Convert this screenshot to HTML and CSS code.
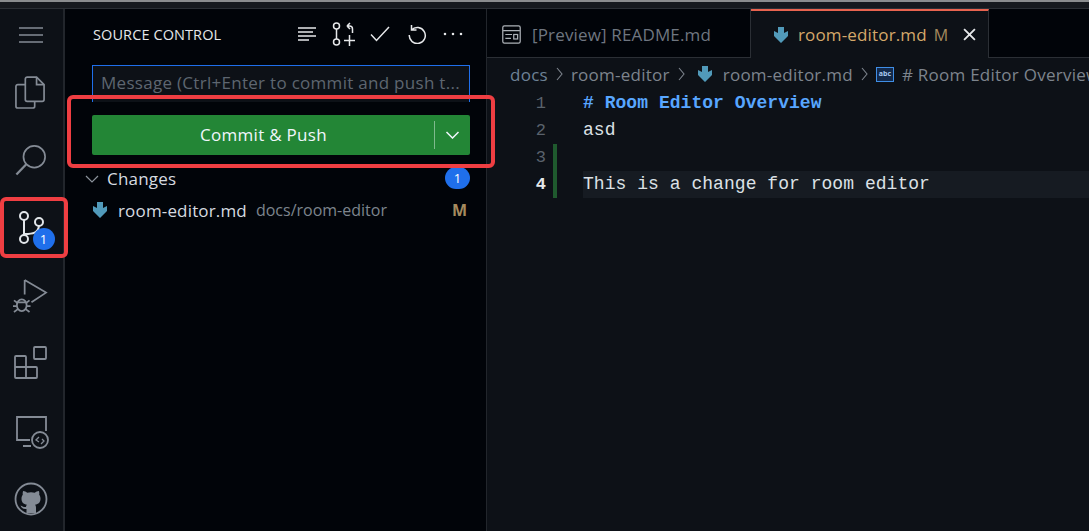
FILE: index.html
```html
<!DOCTYPE html>
<html lang="en">
<head>
<meta charset="utf-8">
<title>Source Control</title>
<link rel="stylesheet" href="styles.css">
</head>
<body>
<div class="topstrip"></div>
<div class="workbench">
  <nav class="activity">
    <svg class="ai menu" viewBox="0 0 24 18"><path d="M0 2h24M0 9h24M0 16h24"/></svg>
    <svg class="ai files" viewBox="0 0 32 36"><path d="M11 9H3a2 2 0 0 0-2 2v21a2 2 0 0 0 2 2h16a2 2 0 0 0 2-2v-5"/><path d="M11 3a2 2 0 0 1 2-2h10l8 8v16a2 2 0 0 1-2 2H13a2 2 0 0 1-2-2z"/><path d="M23 1v8h8"/></svg>
    <svg class="ai search" viewBox="0 0 34 34"><circle cx="20.5" cy="13.5" r="11.5"/><path d="M12 21.5 1.5 32.5" stroke-width="2.4"/></svg>
    <div class="scm-item">
      <svg class="ai scm" viewBox="0 0 28 38"><circle cx="5" cy="6" r="4"/><circle cx="5" cy="29" r="4"/><circle cx="20" cy="12" r="4"/><path d="M5 10v15M6 24c8 0 13-1 14-8"/></svg>
      <span class="act-badge">1</span>
    </div>
    <svg class="ai debug" viewBox="0 0 36 36"><path d="M12 1v15M12 1l22 13-15 10"/><ellipse cx="9" cy="27" rx="5" ry="6"/><path d="M5 24h8M1 22l4 3M17 22l-4 3M0 28h4M14 28h4M1 34l4-3M17 34l-4-3"/></svg>
    <svg class="ai ext" viewBox="0 0 34 34"><path d="M2 10h9a1 1 0 0 1 1 1v10h10a1 1 0 0 1 1 1v9a1 1 0 0 1-1 1H2a1 1 0 0 1-1-1V11a1 1 0 0 1 1-1zM1 21h11M12 21v11"/><rect x="20" y="1" width="12" height="12" rx="1"/></svg>
    <svg class="ai remote" viewBox="0 0 34 34"><path d="M31 16V2H2v23h13M8 31h8"/><circle cx="25" cy="25" r="8"/><path d="m24 22-3 3 3 2M27 24l2 2-3 3" stroke-width="1.3"/></svg>
    <svg class="ai github" viewBox="0 0 34 34"><circle cx="17" cy="17" r="15.5"/><path class="fill" d="M12.5 31v-4c-3.500 .5-5-1-6-3.500 2 .5 3 2 5.500 1.500 0-1 .5-1.800 1-2.200-3.500-.6-5.500-2.300-5.500-6.300 0-1.500.5-2.700 1.300-3.700-.2-1-.2-2.300.3-3.700 1.500 0 3 .8 4 1.700a13 13 0 0 1 7.800 0c1-.9 2.500-1.700 4-1.700.5 1.400.5 2.700.3 3.700.8 1 1.300 2.200 1.300 3.700 0 4-2 5.700-5.500 6.300.7.600 1 1.700 1 3V31z"/></svg>
  </nav>

  <aside class="sidebar">
    <header class="side-head">
      <span class="side-title">SOURCE CONTROL</span>
      <div class="side-actions">
        <svg class="hi" viewBox="0 0 20 16"><path d="M1 2h18M1 6h15M1 10h18M1 14h11"/></svg>
        <svg class="hi hi-wide" viewBox="0 0 24 24"><circle cx="4.500" cy="4" r="3"/><circle cx="4.500" cy="20" r="3"/><path d="M4.500 7v10M15 4h2.500a3 3 0 0 1 3 3v4M15 4l3-3M15 4l3 3M12 18.500h11M17.500 13v11"/></svg>
        <svg class="hi" viewBox="0 0 20 16"><path d="M1 8.500 6.500 14.500 19 1"/></svg>
        <svg class="hi" viewBox="0 0 20 20"><path d="M4.500 1v5h5M4.500 6a8 8 0 1 1-2.200 5"/></svg>
        <svg class="hi" viewBox="0 0 20 4"><path class="dots" d="M2 2h.01M10 2h.01M18 2h.01"/></svg>
      </div>
    </header>
    <div class="msg">Message (Ctrl+Enter to commit and push t...</div>
    <div class="commit">
      <span class="commit-label">Commit &amp; Push</span>
      <span class="commit-sep"></span>
      <svg class="commit-chev" viewBox="0 0 14 8"><path d="m1 1 6 6 6-6"/></svg>
    </div>
    <div class="changes">
      <svg class="chev" viewBox="0 0 14 8"><path d="m1 1 6 6 6-6"/></svg>
      <span class="changes-label">Changes</span>
      <span class="count">1</span>
    </div>
    <div class="file-row">
      <svg class="md" viewBox="0 0 14 16"><path d="M4 0h6v6l4-2v5l-7 7-7-7V4l4 2z"/></svg>
      <span class="file-name">room-editor.md</span>
      <span class="file-path">docs/room-editor</span>
      <span class="file-status">M</span>
    </div>
  </aside>

  <main class="editor">
    <div class="tabs">
      <div class="tab">
        <svg class="preview" viewBox="0 0 17 17"><rect x=".7" y=".7" width="15.600" height="15.600" rx="1.500"/><path d="M1 5h15M3 8.500h6M3 12h5"/><rect x="10.500" y="8.500" width="3.500" height="4"/></svg>
        <span>[Preview] README.md</span>
      </div>
      <div class="tab active">
        <svg class="md" viewBox="0 0 14 16"><path d="M4 0h6v6l4-2v5l-7 7-7-7V4l4 2z"/></svg>
        <span class="tab-name">room-editor.md</span>
        <span class="tab-m">M</span>
        <svg class="tab-x" viewBox="0 0 12 12"><path d="m1 1 10 10M11 1 1 11"/></svg>
      </div>
      <div class="tab-fill"></div>
    </div>
    <div class="crumbs">
      <span class="crumb-root">docs</span>
      <svg class="sep" viewBox="0 0 7 14"><path d="m1 1 5 6-5 6"/></svg>
      <span>room-editor</span>
      <svg class="sep" viewBox="0 0 7 14"><path d="m1 1 5 6-5 6"/></svg>
      <svg class="md" viewBox="0 0 14 16"><path d="M4 0h6v6l4-2v5l-7 7-7-7V4l4 2z"/></svg>
      <span>room-editor.md</span>
      <svg class="sep" viewBox="0 0 7 14"><path d="m1 1 5 6-5 6"/></svg>
      <span class="abc">abc</span>
      <span class="crumb-last"># Room Editor Overview</span>
    </div>
    <div class="code">
      <div class="line"><span class="num">1</span><span class="gutter"></span><span class="text head"># Room Editor Overview</span></div>
      <div class="line"><span class="num">2</span><span class="gutter"></span><span class="text">asd</span></div>
      <div class="line"><span class="num">3</span><span class="gutter added"></span><span class="text"></span></div>
      <div class="line current"><span class="num">4</span><span class="gutter added"></span><span class="text">This is a change for room editor</span></div>
    </div>
  </main>
</div>
<div class="mark mark-scm"></div>
<div class="mark mark-commit"></div>
</body>
</html>
```
FILE: styles.css
```css
* { box-sizing: border-box; }
html, body { margin: 0; height: 100%; overflow: hidden; background: #0d1117; }
body { font-family: "Open Sans", "Noto Sans", sans-serif; color: #c9d1d9; position: relative; }
svg { fill: none; stroke: currentColor; display: block; flex: none; }

.topstrip { height: 9px; background: #16191e; border-top: 2px solid #8a8c8e; border-bottom: 1px solid #2b2f35; }
.workbench { display: flex; height: 522px; }

.activity { width: 65px; flex: none; background: #0d1117; border-right: 2px solid #22262c; display: flex; flex-direction: column; align-items: center; color: #848b95; position: relative; }
.ai { stroke-width: 1.8; }
.menu { width: 24px; height: 18px; margin-top: 17px; margin-left: -2px; stroke-width: 1.5; }
.files { width: 30px; height: 34px; margin-top: 32px; margin-left: -3px; }
.search { width: 32px; height: 34px; margin-top: 33px; margin-left: -1px; }
.scm-item { width: 50px; height: 54px; margin-top: 27px; position: relative; display: flex; padding: 6px 0 0 12px; }
.scm { width: 28px; height: 38px; color: #e2e6ea; stroke-width: 2; }
.act-badge { position: absolute; left: 26px; top: 24px; width: 22px; height: 22px; border-radius: 50%; background: #1f6feb; color: #fff; font-size: 13px; line-height: 22px; text-align: center; }
.debug { width: 35px; height: 35px; margin-top: 21px; margin-left: -2px; }
.ext { width: 34px; height: 34px; margin-top: 32px; margin-left: -2px; }
.remote { width: 34px; height: 34px; margin-top: 35px; }
.github { width: 34px; height: 34px; margin-top: 33px; margin-left: -2px; }
.github .fill { fill: #848b95; stroke: none; }

.sidebar { width: 422px; flex: none; background: #010409; border-right: 1px solid #22262c; display: flex; flex-direction: column; padding: 0 16px 0 27px; }
.side-head { display: flex; align-items: center; justify-content: space-between; height: 50px; padding: 0 0 0 1px; }
.side-title { font-size: 14.500px; letter-spacing: .1px; color: #e6e8ea; }
.side-actions { display: flex; align-items: center; gap: 16.500px; color: #e6e8ea; margin-right: 7px; }
.hi { width: 20px; height: 20px; stroke-width: 1.5; }
.hi-wide { width: 24px; height: 24px; margin: 0 -2px; }
.dots { stroke-width: 2.6; stroke-linecap: round; }
.msg { height: 37px; margin-top: 6px; background: #0d1117; border: 1px solid #1f6feb; border-bottom: 0; padding: 4px 0 0 8px; font-size: 17px; line-height: 26px; color: #5e6670; white-space: nowrap; overflow: hidden; letter-spacing: .29px; }
.commit { height: 40px; margin-top: 13px; background: #238636; border-radius: 2px; display: flex; align-items: center; color: #f0f6fc; }
.commit-label { flex: 1; text-align: center; font-size: 17px; letter-spacing: .28px; padding: 0 0 2px 1px; }
.commit-sep { width: 1px; height: 28px; background: #7fb98d; }
.commit-chev { width: 15px; height: 8px; margin: 0 10px; stroke-width: 1.5; }
.changes { display: flex; align-items: center; height: 24px; margin-top: 12px; margin-left: -7px; font-size: 17px; color: #d6dbe0; }
.chev { width: 14px; height: 8px; stroke-width: 1.2; color: #8b929b; }
.changes-label { flex: 1; margin: -2px 0 0 8px; letter-spacing: .2px; }
.count { width: 25px; height: 22px; border-radius: 11px; background: #1f6feb; color: #fff; font-size: 13px; line-height: 22px; text-align: center; margin-top: -2px; }
.file-row { display: flex; align-items: center; height: 28px; margin-top: 5px; font-size: 17px; white-space: nowrap; }
.md { width: 14px; height: 16px; fill: #519aba; stroke: none; }
.file-row .md { margin-left: 1px; }
.file-name { margin-left: 11px; color: #d6dbe0; letter-spacing: .16px; }
.file-path { margin-left: 9px; color: #7d848d; font-size: 16px; flex: 1; }
.file-status { color: #a68a5e; font-weight: 700; font-size: 16px; margin-right: 3px; }

.editor { flex: 1; min-width: 0; background: #0d1117; }
.tabs { display: flex; height: 49px; background: #010409; }
.tab { width: 264px; display: flex; align-items: center; gap: 11px; padding: 2px 0 0 15px; border-bottom: 1px solid #2b2f35; border-right: 1px solid #2b2f35; font-size: 17px; letter-spacing: .15px; color: #6f7680; white-space: nowrap; }
.preview { width: 19px; height: 19px; color: #adb2b8; stroke-width: 1.100; }
.tab.active { width: 238px; padding: 0 0 0 23px; gap: 0; background: #0d1117; border-top: 2px solid #e8634f; border-bottom: 0; border-right: 1px solid #2b2f35; }
.tab-name { margin-left: 10px; color: #d4a86a; }
.tab-m { margin-left: 7px; color: #a68a5e; font-size: 16px; }
.tab-x { width: 13px; height: 13px; margin-left: 15px; color: #e6e8ea; stroke-width: 1.7; }
.tab-fill { flex: 1; border-bottom: 1px solid #2b2f35; }
.crumbs { display: flex; align-items: center; height: 32px; padding-left: 23px; font-size: 17px; letter-spacing: .25px; color: #7d848d; white-space: nowrap; overflow: hidden; }
.crumb-root { color: #6e8296; }
.sep { width: 7px; height: 14px; margin: 0 8px; stroke-width: 1.1; }
.crumbs .md { margin: 0 11px 0 5px; }
.abc { width: 18px; height: 15px; border: 1.500px solid #3f8ee6; background: #13294a; font-size: 7px; letter-spacing: 0; line-height: 11px; text-align: center; color: #a8c8f0; font-weight: 700; margin: 0 8px 0 0; flex: none; }

.code { font-family: "Liberation Mono", "DejaVu Sans Mono", monospace; font-size: 18px; letter-spacing: .04px; }
.line { display: flex; height: 27px; line-height: 27px; white-space: pre; }
.num { width: 59px; text-align: right; color: #5a626c; font-size: 17px; }
.gutter { width: 4px; margin-left: 7px; flex: none; }
.gutter.added { background: #1f5a2e; }
.text { flex: 1; margin-left: 26px; color: #dce1e6; }
.text.head { color: #58a6ff; font-weight: 700; }
.current .num { color: #e6e8ea; font-weight: 700; }
.current .text { background: #161b22; }

.mark { position: absolute; border: 4px solid #ef3e42; border-radius: 6px; }
.mark-scm { left: 0; top: 197px; width: 68px; height: 61px; }
.mark-commit { left: 67px; top: 95px; width: 428px; height: 73px; }
```
